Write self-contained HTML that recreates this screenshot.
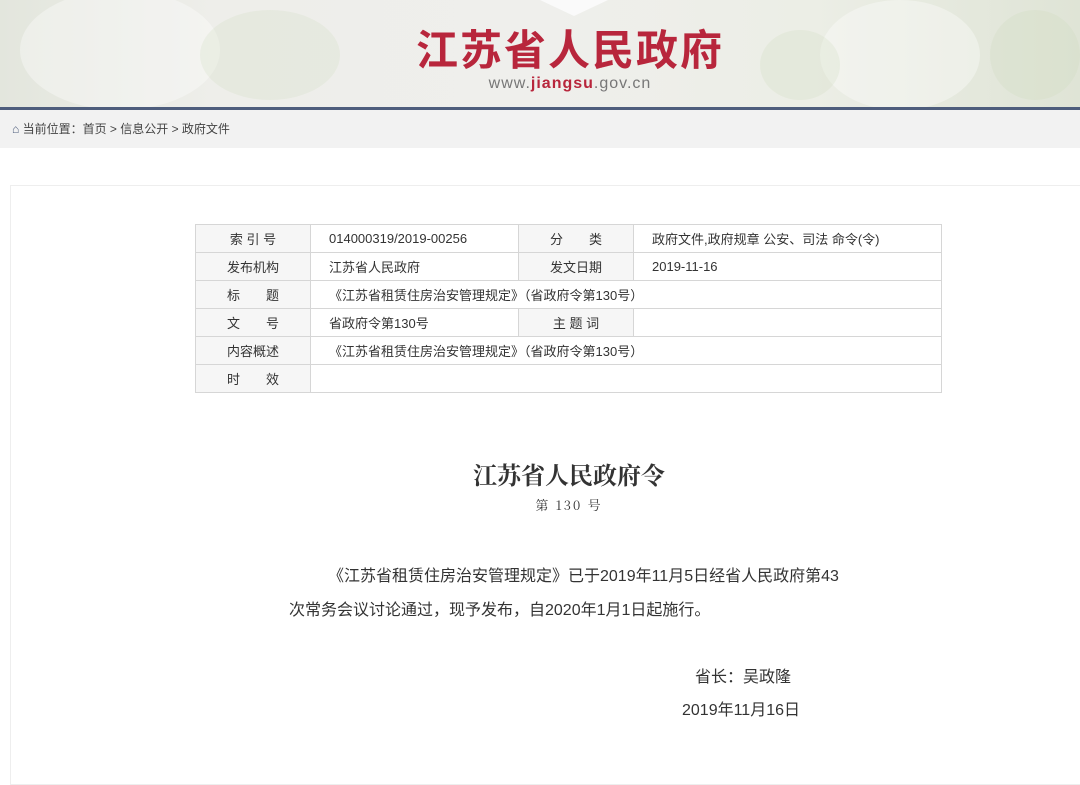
<!DOCTYPE html>
<html><head><meta charset="utf-8"><style>
*{margin:0;padding:0;box-sizing:border-box}
body{width:1080px;height:746px;overflow:hidden;background:#fff;font-family:"Liberation Sans","Noto Sans CJK SC",sans-serif;color:#333;position:relative}
.hd{position:absolute;left:0;top:0;width:1080px;height:107px;background:linear-gradient(90deg,#e3e6dd 0%,#eeeeea 20%,#efefec 50%,#eceee6 75%,#dfe4d6 100%)}
.blob{position:absolute;border-radius:50%;background:rgba(255,255,255,.35)}
.gb{position:absolute;border-radius:50%;background:rgba(200,215,180,.2)}
.tri{position:absolute;left:540px;top:0;width:0;height:0;border-left:34px solid transparent;border-right:34px solid transparent;border-top:16px solid #fafafa}
.t1{position:absolute;left:0;width:1080px;top:22px;text-align:center;font-size:42px;font-weight:bold;color:#b8263c;letter-spacing:2px;font-family:"Noto Sans CJK SC",sans-serif;line-height:52px;padding-left:60px}
.t2{position:absolute;left:0;width:1080px;top:75px;text-align:center;font-size:16px;color:#777;letter-spacing:1px;padding-left:60px}
.t2 b{color:#b8263c}
.line{position:absolute;left:0;top:107px;width:1080px;height:3px;background:#4e5d7c}
.bc{position:absolute;left:0;top:110px;width:1080px;height:38px;background:#f2f2f2;font-size:12px;line-height:38px;padding-left:12px;color:#444}
.card{position:absolute;left:10px;top:185px;width:1080px;height:600px;border:1px solid #eee;border-right:none}
table{position:absolute;left:195px;top:224px;border-collapse:collapse;font-size:13px;color:#333}
td{border:1px solid #d6d6d6;height:28px;padding:0 0 0 18px;white-space:nowrap}
td.l{background:#f6f6f6;text-align:center;padding:0}
.c{position:absolute;left:0;width:1080px;text-align:center}
p{position:absolute;font-size:16px;color:#333}
</style></head><body>
<div class="hd">
<div class="blob" style="left:20px;top:-10px;width:200px;height:120px"></div>
<div class="gb" style="left:200px;top:10px;width:140px;height:90px"></div>
<div class="blob" style="left:820px;top:0;width:160px;height:110px"></div>
<div class="gb" style="left:760px;top:30px;width:80px;height:70px"></div>
<div class="gb" style="left:990px;top:10px;width:90px;height:90px"></div>
<div class="tri"></div>
<div class="t1">江苏省人民政府</div>
<div class="t2">www.<b>jiangsu</b>.gov.cn</div>
</div>
<div class="line"></div>
<div class="bc"><span style="color:#4e5d7c">⌂</span> 当前位置：首页 &gt; 信息公开 &gt; 政府文件</div>
<div class="card"></div>
<table>
<tr><td class="l" style="width:115px">索 引 号</td><td style="width:208px">014000319/2019-00256</td><td class="l" style="width:115px">分　　类</td><td style="width:308px">政府文件,政府规章 公安、司法 命令(令)</td></tr>
<tr><td class="l">发布机构</td><td>江苏省人民政府</td><td class="l">发文日期</td><td>2019-11-16</td></tr>
<tr><td class="l">标　　题</td><td colspan="3">《江苏省租赁住房治安管理规定》（省政府令第130号）</td></tr>
<tr><td class="l">文　　号</td><td>省政府令第130号</td><td class="l">主 题 词</td><td></td></tr>
<tr><td class="l">内容概述</td><td colspan="3">《江苏省租赁住房治安管理规定》（省政府令第130号）</td></tr>
<tr><td class="l">时　　效</td><td colspan="3"></td></tr>
</table>
<div class="c" style="top:456px;left:29px;font-size:24px;font-weight:bold;font-family:'Noto Serif CJK SC',serif;color:#333">江苏省人民政府令</div>
<div class="c" style="top:495px;left:29px;font-size:13px;font-family:'Noto Serif CJK SC',serif;letter-spacing:2px">第 130 号</div>
<p style="left:328px;top:562px">《江苏省租赁住房治安管理规定》已于2019年11月5日经省人民政府第43</p>
<p style="left:289px;top:596px">次常务会议讨论通过，现予发布，自2020年1月1日起施行。</p>
<p style="left:695px;top:663px">省长：吴政隆</p>
<p style="left:682px;top:696px">2019年11月16日</p>
</body></html>
